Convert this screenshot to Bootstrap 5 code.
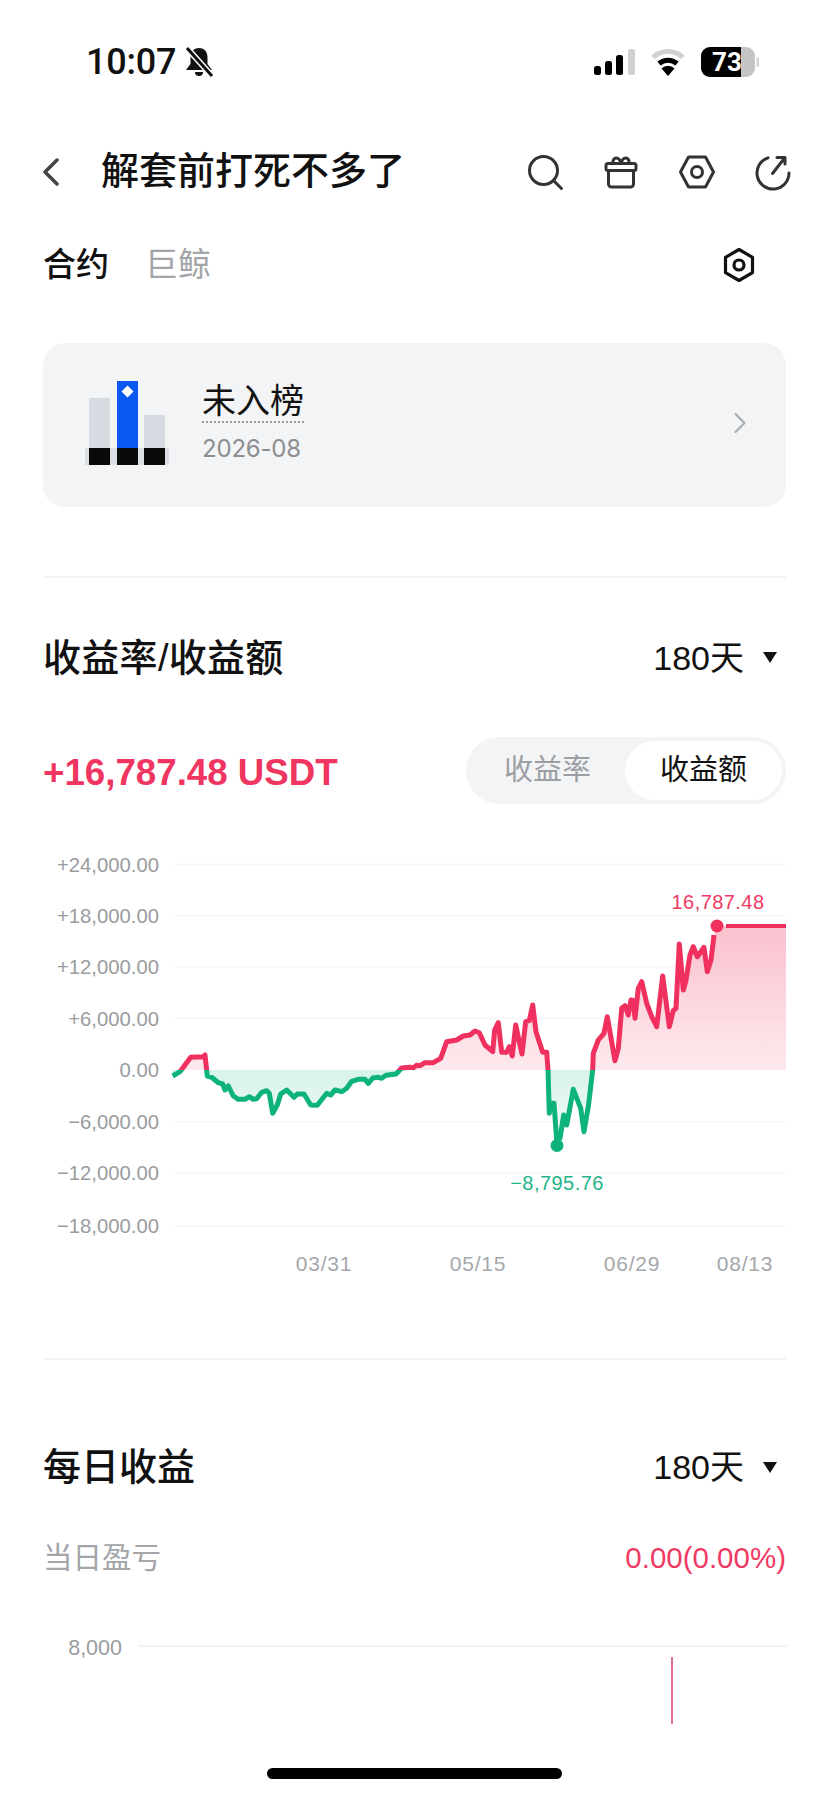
<!DOCTYPE html>
<html lang="zh-CN">
<head>
  <meta charset="utf-8">
  <meta name="viewport" content="width=device-width, initial-scale=1">
  <title>解套前打死不多了</title>
  <link href="https://cdn.jsdelivr.net/npm/bootstrap@5.3.3/dist/css/bootstrap.min.css" rel="stylesheet">
  <style>
    body { background: #fff; color: #111; font-family: "Liberation Sans", "Noto Sans CJK SC", sans-serif; }
    .app-page { width: 828px; height: 1796px; overflow: hidden; }
    .status-row { height: 124px; padding: 0 69px 0 86px; }
    .clock { font: 500 36px/1 Roboto, sans-serif; letter-spacing: -.2px; color: #111; }
    .sig-icon { margin-right: 14px; }
    .wifi-icon { margin-right: 15px; }
    .head-row { height: 96px; padding: 0 35px 0 42px; }
    .page-title { font-size: 38px; font-weight: 500; margin: 0 0 2px 41px; line-height: 1; color: #111; }
    .head-icons { gap: 36px; }
    .tab-row { height: 88px; padding: 0 69px 0 43px; }
    .tab-on, .tab-off { font-size: 33px; font-weight: 500; line-height: 1; }
    .tab-off { color: #a3a5a8; margin-left: 36px; font-weight: 400; }
    .tab-gear { margin-top: 2px; }
    .rank-card { margin: 35px 42px 0 43px; height: 164px; background: #f2f4f6; border-radius: 22px; padding: 0 39px 0 42px; }
    .rank-art { margin-top: -4px; }
    .rank-text { margin: -5px 0 0 33px; }
    .rank-name { font-size: 34px; line-height: 1; padding-bottom: 3px; border-bottom: 2px dotted #9a9a9a; color: #111; }
    .rank-date { font: 400 24px/1 Inter, sans-serif; color: #8c8e91; margin-top: 14px; letter-spacing: -.2px; }
    .split-line { height: 2px; margin: 0 42px 0 43px; background: #f2f3f5; }
    .first-split { margin-top: 69px; }
    .sec-row { height: 159px; padding: 0 51px 0 43px; }
    .sec-row.daily { height: 54px; margin-top: 80px; }
    .sec-title { font-size: 38px; font-weight: 500; line-height: 1; margin: 0; color: #111; letter-spacing: .3px; }
    .daily .sec-title { letter-spacing: 0; }
    .range-pick { font-size: 34px; line-height: 1; gap: 19px; color: #111; }
    .range-arrow { width: 0; height: 0; border-left: 7.5px solid transparent; border-right: 7.5px solid transparent; border-top: 11px solid #111; }
    .amount-row { height: 67px; padding: 0 42px 0 43px; }
    .amount-val { font-size: 36.7px; font-weight: 700; color: #ef3560; line-height: 1; margin-top: 6px; }
    .mode-switch { width: 320px; height: 67px; background: #f2f4f6; padding: 4px; }
    .mode-item { font-size: 29px; line-height: 1; color: #9b9ea2; }
    .mode-left { width: 155px; }
    .mode-active { width: 157px; height: 59px; background: #fff; color: #111; }
    .chart-svg { display: block; }
    .axis-txt { font: 20.3px "Liberation Sans", sans-serif; fill: #9a9c9f; }
    .axis-date { font-size: 21px; letter-spacing: .8px; fill: #a5a7aa; }
    .peak-txt { font: 20px "Liberation Sans", sans-serif; letter-spacing: .45px; }
    .pnl-row { height: 40px; margin-top: 44px; padding: 0 42px 0 43px; }
    .pnl-label { font-size: 29.500px; line-height: 1; color: #a3a5a8; }
    .pnl-val { font-size: 29.500px; line-height: 1; color: #ef3a64; }
    .tick-small { font-size: 21.500px; }
    .home-pill { left: 267px; top: 1768px; width: 295px; height: 11px; background: #000; }
  </style>
</head>
<body class="m-0">

<div class="app-page position-relative">

  <!-- status bar -->
  <div class="status-row d-flex align-items-center justify-content-between">
    <div class="d-flex align-items-center gap-2">
      <span class="clock">10:07</span>
      <svg width="30" height="32" viewBox="0 0 30 32">
        <path d="M15 2c-5.500 0-8.500 4-8.500 9.500V18L2 24h26l-4.500-6v-6.500C23.500 6 20.500 2 15 2z" fill="#111"/>
        <path d="M11 26a4 4 0 0 0 8 0z" fill="#111"/>
        <path d="M3 2l25 28" stroke="#fff" stroke-width="6"/>
        <path d="M3 2l25 28" stroke="#111" stroke-width="3"/>
      </svg>
    </div>
    <div class="d-flex align-items-center">
      <svg class="sig-icon" width="42" height="26" viewBox="0 0 42 26">
        <rect x="0" y="17" width="7" height="9" rx="2.500" fill="#000"/>
        <rect x="11" y="12" width="7" height="14" rx="2.500" fill="#000"/>
        <rect x="22" y="6" width="7" height="20" rx="2.500" fill="#000"/>
        <rect x="34" y="0" width="7" height="26" rx="2.500" fill="#cfcfcf"/>
      </svg>
      <svg class="wifi-icon" width="36" height="28" viewBox="0 0 36 28">
        <path d="M3 9.500a22 22 0 0 1 30 0" fill="none" stroke="#d0d0d0" stroke-width="5"/>
        <path d="M9 15.500a14 14 0 0 1 18 0" fill="none" stroke="#000" stroke-width="5"/>
        <path d="M18 28l-6.500-7.500a9 9 0 0 1 13 0z" fill="#000"/>
      </svg>
      <svg width="58" height="30" viewBox="0 0 58 30">
        <rect x="0" y="0" width="54" height="30" rx="9" fill="#c4c4c4"/>
        <path d="M9 0h31v30H9a9 9 0 0 1-9-9V9a9 9 0 0 1 9-9z" fill="#000"/>
        <path d="M55.500 10a5 5 0 0 1 0 10z" fill="#d4d4d4"/>
        <text x="26" y="24" text-anchor="middle" font-family="Roboto, sans-serif" font-weight="700" font-size="26" fill="#fff">73</text>
      </svg>
    </div>
  </div>

  <!-- title bar -->
  <div class="head-row d-flex align-items-center justify-content-between">
    <div class="d-flex align-items-center">
      <svg width="18" height="28" viewBox="0 0 18 28"><path d="M15 2L3 14l12 12" fill="none" stroke="#444" stroke-width="3.500" stroke-linecap="round" stroke-linejoin="round"/></svg>
      <h1 class="page-title">解套前打死不多了</h1>
    </div>
    <div class="head-icons d-flex align-items-center">
      <svg width="40" height="40" viewBox="0 0 40 40" fill="none" stroke="#333" stroke-width="3" stroke-linecap="round" stroke-linejoin="round">
        <circle cx="18.500" cy="18.500" r="14"/><path d="M29 29l7.500 7.500"/>
      </svg>
      <svg width="40" height="40" viewBox="0 0 40 40" fill="none" stroke="#333" stroke-width="3" stroke-linecap="round" stroke-linejoin="round">
        <rect x="5" y="11.500" width="30" height="7" rx="2"/>
        <path d="M7.500 18.500V32a3 3 0 0 0 3 3h19a3 3 0 0 0 3-3V18.500"/>
        <path d="M12 11.500C11 5 18 3.500 20 11.500 22 3.500 29 5 28 11.500"/>
      </svg>
      <svg width="40" height="40" viewBox="0 0 40 40" fill="none" stroke="#333" stroke-width="3" stroke-linecap="round" stroke-linejoin="round">
        <path d="M3.500 20l8-15h17l8 15-8 15h-17z"/><circle cx="20" cy="20" r="5.500"/>
      </svg>
      <svg width="40" height="40" viewBox="0 0 40 40" fill="none" stroke="#333" stroke-width="3" stroke-linecap="round" stroke-linejoin="round">
        <path d="M15 5.800A16 16 0 1 0 36 21"/><path d="M19.500 21.500L32 5.500M24 5.500h8V12"/>
      </svg>
    </div>
  </div>

  <!-- tabs -->
  <div class="tab-row d-flex align-items-center">
    <span class="tab-on">合约</span>
    <span class="tab-off">巨鲸</span>
    <svg class="tab-gear ms-auto" width="40" height="40" viewBox="0 0 40 40" fill="none" stroke="#111" stroke-width="3.200" stroke-linejoin="round">
      <path d="M20 4.500l13.500 7.800v15.400L20 35.500 6.500 27.700V12.300z"/><circle cx="20" cy="20" r="5"/>
    </svg>
  </div>

  <!-- rank card -->
  <div class="rank-card d-flex align-items-center">
    <svg class="rank-art flex-shrink-0" width="84" height="84" viewBox="0 0 84 84">
      <rect x="0" y="67" width="84" height="17" fill="#dcdfe3"/>
      <rect x="4" y="17" width="21" height="50" fill="#d6dae1"/>
      <rect x="32" y="0" width="21" height="67" fill="#0a58f0"/>
      <rect x="59" y="34" width="21" height="33" fill="#d6dae1"/>
      <rect x="4" y="67" width="21" height="17" fill="#0a0a0a"/>
      <rect x="32" y="67" width="21" height="17" fill="#0a0a0a"/>
      <rect x="59" y="67" width="21" height="17" fill="#0a0a0a"/>
      <path d="M42.500 4.500l6 6-6 6-6-6z" fill="#fff"/>
    </svg>
    <div class="rank-text flex-grow-1">
      <div class="d-inline-block"><div class="rank-name">未入榜</div></div>
      <div class="rank-date">2026-08</div>
    </div>
    <svg class="mb-1" width="14" height="22" viewBox="0 0 14 22"><path d="M2.500 2l9 9-9 9" fill="none" stroke="#a9acb0" stroke-width="2.200" stroke-linecap="round" stroke-linejoin="round"/></svg>
  </div>

  <div class="split-line first-split"></div>

  <!-- profit section -->
  <div class="sec-row d-flex align-items-center justify-content-between">
    <h2 class="sec-title">收益率/收益额</h2>
    <div class="range-pick d-flex align-items-center"><span>180天</span><span class="range-arrow"></span></div>
  </div>
  <div class="amount-row d-flex align-items-center justify-content-between">
    <span class="amount-val">+16,787.48 USDT</span>
    <div class="mode-switch d-flex align-items-center rounded-pill">
      <span class="mode-item mode-left text-center">收益率</span>
      <span class="mode-item mode-active rounded-pill d-flex align-items-center justify-content-center">收益额</span>
    </div>
  </div>

  <svg id="profitChart" class="chart-svg" width="828" height="554" viewBox="0 804 828 554">
    <defs>
      <linearGradient id="redFade" gradientUnits="userSpaceOnUse" x1="0" y1="926" x2="0" y2="1070">
        <stop offset="0" stop-color="#f8a9ba" stop-opacity=".72"/>
        <stop offset="1" stop-color="#f8a9ba" stop-opacity=".25"/>
      </linearGradient>
      <linearGradient id="greenFade" gradientUnits="userSpaceOnUse" x1="0" y1="1070" x2="0" y2="1150">
        <stop offset="0" stop-color="#12b886" stop-opacity=".17"/>
        <stop offset="1" stop-color="#12b886" stop-opacity=".02"/>
      </linearGradient>
      <clipPath id="overZero"><rect x="0" y="804" width="828" height="266"/></clipPath>
      <clipPath id="underZero"><rect x="0" y="1070" width="828" height="288"/></clipPath>
    </defs>
    <g id="gridLines" stroke="#f5f5f7" stroke-width="1.500"></g>
    <g id="yLabels" class="axis-txt" text-anchor="end"></g>
    <path id="fillUp" fill="url(#redFade)" clip-path="url(#overZero)"/>
    <path id="fillDown" fill="url(#greenFade)" clip-path="url(#underZero)"/>
    <path id="lineUp" fill="none" stroke="#f0305e" stroke-width="5" stroke-linejoin="round" clip-path="url(#overZero)"/>
    <path id="lineDown" fill="none" stroke="#0db27d" stroke-width="5" stroke-linejoin="round" clip-path="url(#underZero)"/>
    <path d="M726 926H786" stroke="#f0305e" stroke-width="4"/>
    <circle cx="717" cy="926" r="6.500" fill="#f0305e"/>
    <circle cx="557" cy="1145.500" r="6.500" fill="#0db27d"/>
    <text class="peak-txt" x="718" y="909" text-anchor="middle" fill="#ee3a63">16,787.48</text>
    <text class="peak-txt" x="557" y="1190" text-anchor="middle" fill="#1fb489">−8,795.76</text>
    <g class="axis-txt axis-date" text-anchor="middle">
      <text x="324" y="1271">03/31</text>
      <text x="478" y="1271">05/15</text>
      <text x="632" y="1271">06/29</text>
      <text x="745" y="1271">08/13</text>
    </g>
  </svg>

  <div class="split-line"></div>

  <!-- daily section -->
  <div class="sec-row daily d-flex align-items-center justify-content-between">
    <h2 class="sec-title">每日收益</h2>
    <div class="range-pick d-flex align-items-center"><span>180天</span><span class="range-arrow"></span></div>
  </div>
  <div class="pnl-row d-flex align-items-center justify-content-between">
    <span class="pnl-label">当日盈亏</span>
    <span class="pnl-val">0.00(0.00%)</span>
  </div>
  <svg class="chart-svg" width="828" height="160" viewBox="0 1578 828 160">
    <text x="122" y="1655" text-anchor="end" class="axis-txt tick-small">8,000</text>
    <path d="M138 1646H787" stroke="#f2f2f5" stroke-width="2"/>
    <path d="M672 1657V1724" stroke="#dc3d68" stroke-width="1.500"/>
  </svg>

  <div class="home-pill position-absolute rounded-pill"></div>
</div>

<script src="https://cdn.jsdelivr.net/npm/bootstrap@5.3.3/dist/js/bootstrap.bundle.min.js"></script>
<script>
  // curve points read off the reference, in 3x crop units
  const leftPart = [[518,708],[540,695],[572,652],[610,650],[615,645],[622,708],[635,712],[655,728],[668,732],[675,750],[685,738],[700,768],[715,778],[735,778],[748,770],[760,778],[770,776],[785,757],[800,752],[808,760],[818,820],[832,795],[842,762],[860,750],[882,772],[892,762],[912,762],[932,795],[952,796],[980,760],[992,765],[1005,750],[1025,755],[1040,745],[1055,724],[1075,718],[1095,718],[1105,730],[1118,714],[1135,712],[1145,715],[1158,706],[1188,702],[1205,684],[1230,682],[1240,683],[1250,676]];
  const rightPart = [[0,677],[15,668],[40,668],[62,655],[80,605],[110,600],[130,588],[150,585],[165,573],[178,578],[195,615],[218,635],[224,570],[235,548],[245,637],[260,637],[268,620],[277,648],[287,555],[306,642],[317,545],[328,542],[338,495],[348,575],[368,637],[380,637],[384,690],[388,820],[392,790],[402,790],[410,900],[420,895],[431,825],[440,855],[460,748],[482,805],[492,875],[505,800],[518,690],[520,640],[535,600],[552,580],[562,530],[585,662],[595,625],[605,505],[615,497],[625,525],[633,480],[640,482],[645,535],[655,445],[665,425],[680,490],[695,530],[710,560],[728,408],[748,560],[760,512],[768,505],[778,312],[790,450],[797,425],[810,345],[820,320],[832,350],[852,322],[862,395],[873,360],[882,285]];

  const pts = leftPart.map(p => [p[0] / 3, 840 + p[1] / 3])
    .concat(rightPart.map(p => [(1260 + p[0]) / 3, 840 + p[1] / 3]));
  const linePath = "M" + pts.map(p => p[0].toFixed(1) + " " + p[1].toFixed(1)).join("L");
  const zeroY = 1070;
  const areaPath = linePath + "L717 926H786V" + zeroY + "H" + pts[0][0].toFixed(1) + "Z";

  document.getElementById("lineUp").setAttribute("d", linePath);
  document.getElementById("lineDown").setAttribute("d", linePath);
  document.getElementById("fillUp").setAttribute("d", areaPath);
  document.getElementById("fillDown").setAttribute("d", areaPath);

  const ticks = [["+24,000.00",864.5],["+18,000.00",915.5],["+12,000.00",967],["+6,000.00",1018.5],["0.00",1070],["−6,000.00",1121.5],["−12,000.00",1173],["−18,000.00",1226]];
  const ns = "http://www.w3.org/2000/svg";
  ticks.forEach(t => {
    const label = document.createElementNS(ns, "text");
    label.setAttribute("x", 159);
    label.setAttribute("y", t[1] + 7);
    label.textContent = t[0];
    document.getElementById("yLabels").appendChild(label);
    if (t[0] !== "0.00") {
      const line = document.createElementNS(ns, "line");
      line.setAttribute("x1", 175);
      line.setAttribute("x2", 786);
      line.setAttribute("y1", t[1]);
      line.setAttribute("y2", t[1]);
      document.getElementById("gridLines").appendChild(line);
    }
  });
</script>
</body>
</html>
